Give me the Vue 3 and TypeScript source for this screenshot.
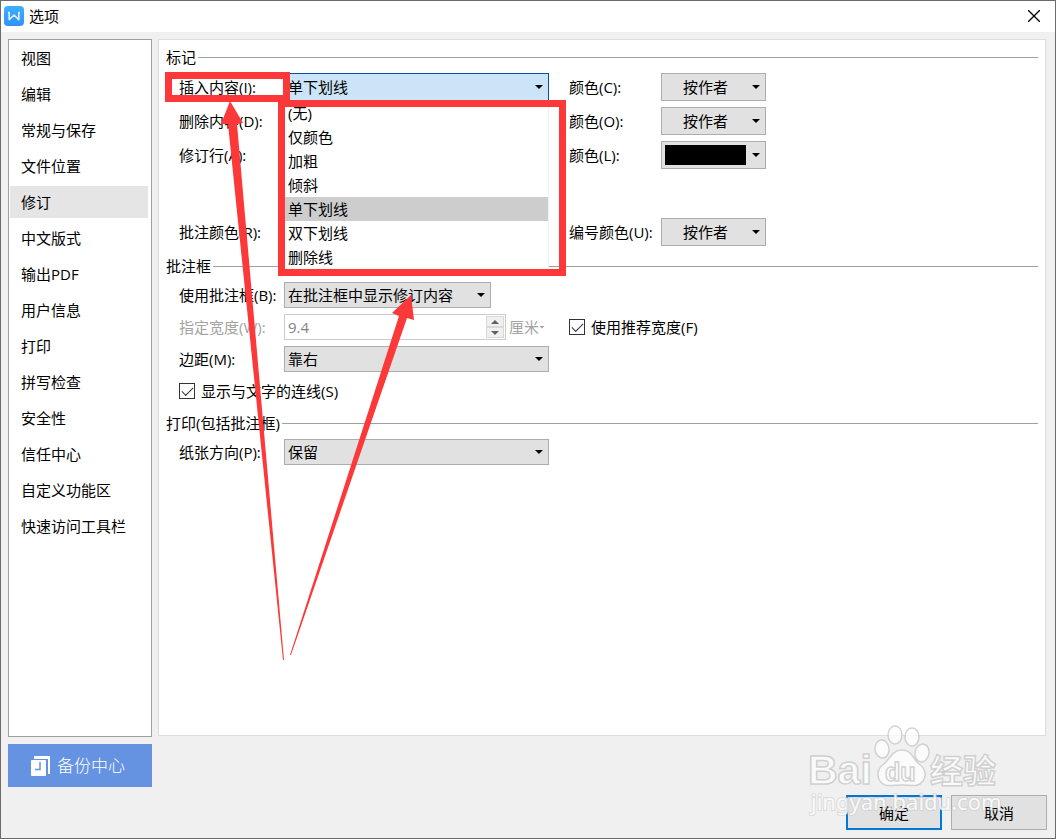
<script setup lang="ts">
import { ref } from 'vue'

interface ColorRow {
  id: string
  label: string
  colorId: string
  colorLabel: string
  value: string
  swatch: boolean
}

const pages: string[] = [
  '视图', '编辑', '常规与保存', '文件位置', '修订', '中文版式', '输出PDF',
  '用户信息', '打印', '拼写检查', '安全性', '信任中心', '自定义功能区', '快速访问工具栏',
]
const currentPage = ref('修订')

const markStyles: string[] = ['(无)', '仅颜色', '加粗', '倾斜', '单下划线', '双下划线', '删除线']
const insertStyle = ref('单下划线')
const listOpen = ref(true)

const rows: ColorRow[] = [
  { id: 'insert', label: '插入内容(I):', colorId: 'color-c', colorLabel: '颜色(C):', value: '单下划线', swatch: false },
  { id: 'remove', label: '删除内容(D):', colorId: 'color-o', colorLabel: '颜色(O):', value: '删除线', swatch: false },
  { id: 'lines', label: '修订行(A):', colorId: 'color-l', colorLabel: '颜色(L):', value: '外侧框线', swatch: true },
  { id: 'note', label: '批注颜色(R):', colorId: 'color-u', colorLabel: '编号颜色(U):', value: '按作者', swatch: false },
]

const recommended = ref(true)
const connectors = ref(true)

function choose(style: string): void {
  insertStyle.value = style
  listOpen.value = false
}
</script>

<template>
  <div class="dialog">
    <header class="titlebar">
      <svg class="logo" viewBox="0 0 20 20" aria-hidden="true">
        <defs>
          <linearGradient id="logo-fill" x1="0" y1="0" x2="0" y2="1">
            <stop offset="0" stop-color="#3bb0ff" />
            <stop offset="1" stop-color="#3391f8" />
          </linearGradient>
        </defs>
        <rect width="20" height="20" rx="4" fill="url(#logo-fill)" />
        <path d="M4 6.600h1.200v7L10 9l4.800 4.600v-7H16" fill="none" stroke="#d9efff" stroke-width="1.600" stroke-linejoin="round" />
      </svg>
      <h1>选项</h1>
      <button class="close" type="button" aria-label="关闭">
        <svg viewBox="0 0 12 12"><path d="M0 0L12 12M12 0L0 12" stroke="#000" stroke-width="1.300" /></svg>
      </button>
    </header>

    <div class="body">
      <nav class="sidebar">
        <button
          v-for="page in pages"
          :key="page"
          type="button"
          :class="{ active: page === currentPage }"
          @click="currentPage = page"
        >{{ page }}</button>
      </nav>

      <main class="panel">
        <section>
          <h2>标记</h2>
          <div class="marks">
            <div v-for="row in rows" :key="row.id" class="row mark-row">
              <label class="name" :for="row.id">{{ row.label }}</label>
              <div v-if="row.id === 'insert'" class="combo open">
                <select :id="row.id" v-model="insertStyle">
                  <option v-for="s in markStyles" :key="s">{{ s }}</option>
                </select>
                <ul v-if="listOpen" class="list" role="listbox">
                  <li
                    v-for="s in markStyles"
                    :key="s"
                    role="option"
                    :aria-selected="s === insertStyle"
                    :class="{ chosen: s === insertStyle }"
                    @click="choose(s)"
                  >{{ s }}</li>
                </ul>
              </div>
              <div v-else class="combo">
                <select :id="row.id"><option>{{ row.value }}</option></select>
              </div>
              <label class="color-name" :for="row.colorId">{{ row.colorLabel }}</label>
              <button :id="row.colorId" class="color" type="button">
                <span v-if="row.swatch" class="swatch"></span>
                <span v-else class="author">按作者</span>
                <i class="caret"></i>
              </button>
            </div>
          </div>
        </section>

        <section>
          <h2>批注框</h2>
          <div class="rows">
            <div class="row">
              <label class="name" for="balloon">使用批注框(B):</label>
              <div class="combo short"><select id="balloon"><option>在批注框中显示修订内容</option></select></div>
            </div>
            <div class="row">
              <label class="name muted" for="width">指定宽度(W):</label>
              <div class="measure">
                <div class="spin">
                  <input id="width" type="text" value="9.4" disabled>
                  <div class="steps">
                    <button type="button" aria-label="增加" disabled><svg viewBox="0 0 8 4"><path d="M0 4L4 0L8 4Z" /></svg></button>
                    <button type="button" aria-label="减少" disabled><svg viewBox="0 0 8 4"><path d="M0 0L4 4L8 0Z" /></svg></button>
                  </div>
                </div>
                <span class="unit muted">厘米<i></i></span>
              </div>
              <label class="check side"><input v-model="recommended" type="checkbox"><span>使用推荐宽度(F)</span></label>
            </div>
            <div class="row">
              <label class="name" for="margin">边距(M):</label>
              <div class="combo"><select id="margin"><option>靠右</option></select></div>
            </div>
            <label class="check"><input v-model="connectors" type="checkbox"><span>显示与文字的连线(S)</span></label>
          </div>
        </section>

        <section>
          <h2>打印(包括批注框)</h2>
          <div class="rows">
            <div class="row">
              <label class="name" for="paper">纸张方向(P):</label>
              <div class="combo"><select id="paper"><option>保留</option></select></div>
            </div>
          </div>
        </section>
      </main>
    </div>

    <footer>
      <button class="backup" type="button">
        <svg viewBox="0 0 20 20" aria-hidden="true">
          <path d="M3 0h16v18h-2V3H3z" fill="#fff" />
          <rect y="4" width="15" height="16" rx="1" fill="#fff" />
          <path d="M9 6v7.500H4" fill="none" stroke="#6593e1" stroke-width="1.500" />
        </svg>
        备份中心
      </button>
      <div class="actions">
        <button class="primary" type="button">确定</button>
        <button type="button">取消</button>
      </div>
    </footer>

    <svg class="watermark" viewBox="0 0 200 96" aria-hidden="true">
      <g fill="#fff" fill-opacity="0.72" stroke="#c4c4c4" stroke-opacity="0.75" stroke-width="1.500">
        <ellipse cx="86" cy="15" rx="7" ry="9" />
        <ellipse cx="103" cy="17" rx="7" ry="9" />
        <ellipse cx="73" cy="29" rx="7" ry="9" transform="rotate(-8 73 29)" />
        <ellipse cx="113" cy="33" rx="7" ry="9" transform="rotate(12 113 33)" />
        <path d="M93 30C83 30 81 39 75 44C69 48 67 55 71 61C75 68 84 65 93 65C102 65 109 68 114 61C118 55 116 48 110 44C104 39 103 30 93 30Z" />
        <g class="brand">
          <text x="-1" y="64" font-size="41">Bai</text>
          <text x="76" y="61" font-size="25" fill-opacity="0.5">du</text>
          <text x="121" y="63" font-size="33">经验</text>
        </g>
      </g>
      <text class="site" x="2" y="90" font-size="22">jingyan.baidu.com</text>
    </svg>

    <svg class="callouts" viewBox="0 0 600 700" aria-hidden="true">
      <g fill="none" stroke="#fd3838" stroke-width="7">
        <rect x="168.500" y="75.500" width="118" height="23" />
        <rect x="281.500" y="103.500" width="281" height="169" />
      </g>
      <g fill="#fd3838">
        <path d="M230 101L243 123L237 124L284 660L283 660L228 124L221 124Z" />
        <path d="M411 295L414 320L407 318L291 655L290 655L399 316L392 313Z" />
      </g>
    </svg>
  </div>
</template>

<style>
body {
  margin: 0;
}
</style>

<style scoped>
.dialog,
.dialog * {
  box-sizing: border-box;
}

.dialog {
  position: relative;
  display: flex;
  flex-direction: column;
  min-height: 100vh;
  border: 1px solid #6b6b6b;
  background: #f0f0f0;
  color: #000;
  font: 15px/18px "Open Sans", "Noto Sans CJK SC", sans-serif;
}

button,
select,
input {
  margin: 0;
  padding: 0;
  border: 0;
  border-radius: 0;
  color: inherit;
  font: inherit;
}

.titlebar {
  display: flex;
  align-items: center;
  height: 31px;
  padding: 0 15px 1px 3px;
  background: #fff;
}

.logo {
  width: 20px;
  height: 20px;
}

h1 {
  flex: 1;
  margin: 0 0 0 5px;
  font-size: 15px;
  font-weight: 400;
}

.close {
  display: flex;
  background: none;
}

.close svg {
  width: 12px;
  height: 12px;
}

.body {
  display: grid;
  flex: 1;
  grid-template-columns: 144px 1fr;
  gap: 6px;
  padding: 7px 9px 0 7px;
}

.sidebar {
  display: flex;
  flex-direction: column;
  gap: 4px;
  padding: 2px 3px 2px 1px;
  border: 1px solid #a0a0a0;
  background: #fff;
}

.sidebar button {
  height: 32px;
  padding-left: 11px;
  background: none;
  text-align: left;
}

.sidebar .active {
  background: #e5e5e5;
}

.panel {
  margin-bottom: 1px;
  padding: 8px 7px;
  border: 1px solid #dcdcdc;
  background: #fff;
}

h2 {
  display: flex;
  align-items: center;
  gap: 2px;
  margin: 0 0 7px;
  font-size: 15px;
  font-weight: 400;
}

h2::after {
  flex: 1;
  height: 1px;
  background: #a0a0a0;
  content: "";
}

section + section {
  margin-top: 11px;
}

.marks,
.rows {
  display: flex;
  flex-direction: column;
  gap: 6px;
  padding-left: 13px;
}

.row {
  display: grid;
  grid-template-columns: 105px 265px 112px 105px;
  align-items: center;
  height: 26px;
}

.mark-row {
  height: 28px;
}

.row .color-name,
.row .side {
  margin-left: 20px;
}

.mark-row:last-child {
  margin-top: 43px;
}

.name,
.color-name {
  white-space: nowrap;
}

.muted {
  color: #a3a3a3;
}

.combo {
  position: relative;
  height: 100%;
}

.combo.short {
  width: 207px;
}

.combo select {
  display: block;
  width: 100%;
  height: 100%;
  padding: 0 20px 0 3px;
  border: 1px solid #adadad;
  background: #e1e1e1;
  appearance: none;
}

.combo.open select {
  border-color: #005499;
  background: #cce4f7;
}

.combo::after,
.caret {
  position: absolute;
  top: 50%;
  right: 5px;
  width: 8px;
  height: 4px;
  margin-top: -2px;
  background: #000;
  clip-path: polygon(0 0, 100% 0, 50% 100%);
  content: "";
  pointer-events: none;
}

.combo::after {
  right: 6px;
}

.list {
  position: absolute;
  z-index: 2;
  top: 100%;
  left: 0;
  width: 100%;
  margin: 0;
  padding: 0;
  border-right: 1px solid #efefef;
  background: #fff;
  list-style: none;
}

.list li {
  padding: 3px 4px;
}

.list .chosen {
  background: #cdcdcd;
}

.color {
  position: relative;
  display: flex;
  align-items: center;
  height: 28px;
  border: 1px solid #adadad;
  background: #e1e1e1;
}

.author {
  margin-left: 21px;
}

.swatch {
  width: 81px;
  height: 20px;
  margin-left: 3px;
  background: #000;
}

.measure {
  display: flex;
  align-items: center;
  gap: 3px;
  height: 26px;
}

.spin {
  display: flex;
  flex: none;
  width: 222px;
  height: 26px;
  padding: 1px;
  border: 1px solid #ccc;
}

.spin input {
  flex: 1;
  min-width: 0;
  padding-left: 2px;
  background: #fff;
  color: #838383;
}

.steps {
  display: flex;
  flex-direction: column;
  width: 18px;
}

.steps button {
  display: flex;
  flex: 1;
  align-items: center;
  justify-content: center;
  border: 1px solid #d9d9d9;
  background: #f0f0f0;
}

.steps svg {
  width: 8px;
  height: 4px;
  fill: #606060;
}

.unit {
  display: flex;
  align-items: center;
  white-space: nowrap;
}

.unit i {
  flex: none;
  width: 6px;
  height: 3px;
  background: #a3a3a3;
  clip-path: polygon(0 0, 100% 0, 50% 100%);
}

.check {
  display: flex;
  align-items: center;
  gap: 6px;
  height: 25px;
  white-space: nowrap;
}

.check input {
  position: relative;
  flex: none;
  width: 16px;
  height: 16px;
  border: 1px solid #333;
  background: #fff;
  appearance: none;
}

.check input:checked::after {
  position: absolute;
  top: 3px;
  left: 2px;
  width: 10px;
  height: 5px;
  border: solid #333;
  border-width: 0 0 1px 1px;
  content: "";
  transform: rotate(-45deg);
}

footer {
  display: flex;
  flex-direction: column;
  gap: 8px;
  padding: 7px 8px 8px 7px;
}

.backup {
  display: flex;
  align-items: center;
  gap: 6px;
  width: 144px;
  height: 43px;
  padding-left: 23px;
  background: #6593e1;
  color: #fff;
  font-size: 17px;
  font-weight: 300;
}

.backup svg {
  width: 20px;
  height: 20px;
}

.actions {
  display: flex;
  justify-content: flex-end;
  gap: 9px;
}

.actions button {
  width: 96px;
  height: 35px;
  border: 1px solid #adadad;
  background: #e1e1e1;
}

.actions .primary {
  border: 2px solid #0078d7;
}

.watermark {
  position: absolute;
  right: 46px;
  bottom: 22px;
  width: 200px;
  height: 96px;
  overflow: visible;
  pointer-events: none;
}

.brand {
  font-family: "Liberation Sans", "Noto Sans CJK SC", sans-serif;
  font-weight: 700;
}

.site {
  fill: #fff;
  fill-opacity: 0.85;
  stroke: #c8c8c8;
  stroke-opacity: 0.5;
  stroke-width: 2px;
  paint-order: stroke;
  font-family: "Noto Sans", sans-serif;
}

.callouts {
  position: absolute;
  z-index: 3;
  top: -1px;
  left: -1px;
  width: 600px;
  height: 700px;
  pointer-events: none;
}
</style>
